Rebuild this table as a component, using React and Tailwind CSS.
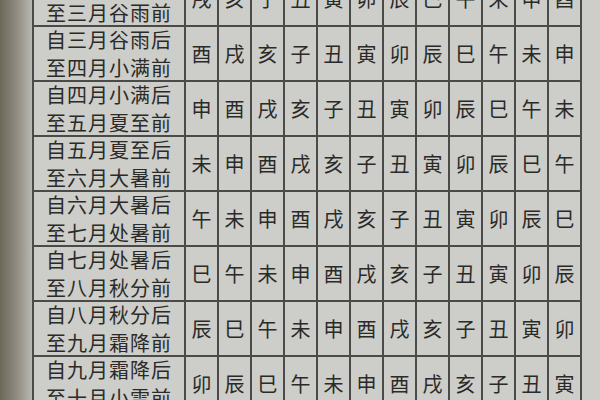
import React from 'react';

const branches = ['子', '丑', '寅', '卯', '辰', '巳', '午', '未', '申', '酉', '戌', '亥'];

const rows = [
  { from: '自二月春分后', to: '至三月谷雨前', start: 10 },
  { from: '自三月谷雨后', to: '至四月小满前', start: 9 },
  { from: '自四月小满后', to: '至五月夏至前', start: 8 },
  { from: '自五月夏至后', to: '至六月大暑前', start: 7 },
  { from: '自六月大暑后', to: '至七月处暑前', start: 6 },
  { from: '自七月处暑后', to: '至八月秋分前', start: 5 },
  { from: '自八月秋分后', to: '至九月霜降前', start: 4 },
  { from: '自九月霜降后', to: '至十月小雪前', start: 3 },
];

const App = () => {
  return (
    <div
      className="w-[600px] h-[400px] overflow-hidden flex bg-[#cdcdc9] text-[#2a2a28]"
      style={{ fontFamily: '"Noto Sans CJK SC", "Noto Sans", sans-serif' }}
    >
      {/* book spine shadow */}
      <div className="w-[32px] shrink-0 bg-gradient-to-r from-[#6e685b] via-[#8e8a80] to-[#b8b7b1]"></div>

      <div className="mt-[-30px]">
        <table className="border-collapse border-2 border-[#4a4a48]">
          <tbody>
            {rows.map((row, i) => (
              <tr key={i} className="h-[55px]">
                <td className="w-[152px] border-2 border-[#4a4a48] text-center text-[20px] tracking-[1px] p-0">
                  <div className="h-[51px] flex flex-col justify-between">
                    <div className="leading-[23px]">{row.from}</div>
                    <div className="leading-[23px]">{row.to}</div>
                  </div>
                </td>
                {Array.from({ length: 12 }).map((_, j) => (
                  <td
                    key={j}
                    className="w-[33px] border-2 border-[#4a4a48] text-center text-[20px] p-0"
                  >
                    {branches[(row.start + j) % 12]}
                  </td>
                ))}
              </tr>
            ))}
          </tbody>
        </table>
      </div>
    </div>
  );
};

export default App;
